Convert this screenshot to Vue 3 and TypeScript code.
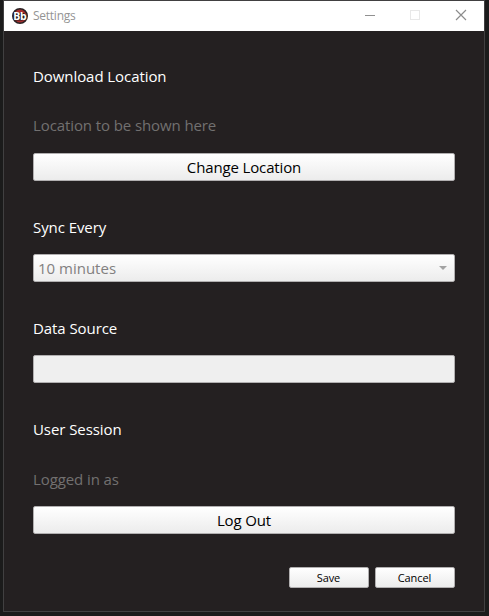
<script setup lang="ts">
import { ref } from 'vue'

const title = 'Settings'
const interval = ref('10 minutes')
const source = ref('')
</script>

<template>
  <div class="desktop">
    <main class="window">
      <header class="titlebar">
        <svg class="logo" width="16" height="16" viewBox="0 0 16 16">
          <circle cx="8" cy="8" r="7.2" fill="#a62d2d" stroke="#2b2224" stroke-width="1.6" />
          <path d="M1 5.2l3-1.5 3 1 5 .3 2.6 3-1.4 3.4-3.2 1.2H4L1 10z" fill="#251d20" />
          <text x="7.7" y="11.6" class="logo-text">Bb</text>
        </svg>
        <span class="title">{{ title }}</span>
        <nav class="controls">
          <svg width="46" height="30" viewBox="0 0 46 30"><path d="M19 14.5h10" stroke="#909090" /></svg>
          <svg width="46" height="30" viewBox="0 0 46 30"><rect x="18.5" y="9.5" width="9" height="9" fill="none" stroke="#e8e8e8" /></svg>
          <svg width="46" height="30" viewBox="0 0 46 30"><path d="M18 9l10 10M28 9L18 19" stroke="#8c8c8c" stroke-width="1.15" /></svg>
        </nav>
      </header>

      <section class="body">
        <div class="group">
          <h2>Download Location</h2>
          <p>Location to be shown here</p>
          <button class="control">Change Location</button>
        </div>
        <div class="group">
          <h2>Sync Every</h2>
          <div class="control select">
            <span>{{ interval }}</span>
            <svg width="8" height="4" viewBox="0 0 8 4"><path d="M0 0h8L4 4z" fill="#a3a3a3" /></svg>
          </div>
        </div>
        <div class="group">
          <h2>Data Source</h2>
          <input v-model="source" class="control input" type="text" />
        </div>
        <div class="group">
          <h2>User Session</h2>
          <p class="user">Logged in as</p>
          <button class="control">Log Out</button>
        </div>
        <footer>
          <button class="small">Save</button>
          <button class="small">Cancel</button>
        </footer>
      </section>
    </main>
  </div>
</template>

<style>
body {
  background: #1b1b1b;
}
</style>

<style scoped>
.desktop {
  box-sizing: border-box;
  width: 489px;
  height: 616px;
  padding: 0 4px 4px 3px;
  background: #1b1b1b;
  font-family: "Open Sans", "Noto Sans", sans-serif;
}
.window {
  box-sizing: border-box;
  width: 482px;
  height: 612px;
  border: 1px solid #414041;
  background: #242021;
}
.titlebar {
  display: flex;
  align-items: center;
  box-sizing: border-box;
  height: 30px;
  padding-left: 8px;
  background: #fff;
}
.logo {
  display: block;
  margin-top: -1px;
}
.logo-text {
  font: 700 10.5px "Open Sans", sans-serif;
  letter-spacing: -0.4px;
  fill: #fff;
  text-anchor: middle;
}
.title {
  margin-left: 5px;
  font-size: 12px;
  line-height: 16px;
  letter-spacing: -0.25px;
  color: #949494;
}
.controls {
  display: flex;
  margin-left: auto;
}
.controls svg {
  display: block;
}
.body {
  padding: 35px 29px 0;
}
.group {
  display: flex;
  flex-direction: column;
  margin-bottom: 36px;
}
h2,
p {
  margin: 0;
  font-size: 15px;
  font-weight: 400;
  line-height: 20px;
}
h2 {
  margin-bottom: 17px;
  letter-spacing: -0.07px;
  color: #fff;
}
p {
  margin: 12px 0 18px;
  letter-spacing: -0.1px;
  color: #727070;
}
.user {
  margin: 13px 0 17px;
}
.control {
  box-sizing: border-box;
  width: 422px;
  height: 28px;
  margin: 0;
  padding: 0 5px;
  border: 1px solid #b1afb0;
  border-radius: 2px;
  background: linear-gradient(#fff, #ececec);
  font: 15px/26px "Open Sans", "Noto Sans", sans-serif;
  letter-spacing: -0.14px;
  color: #000;
}
.select {
  display: flex;
  align-items: center;
  justify-content: space-between;
  padding: 0 7px 0 4px;
  letter-spacing: 0;
  color: #828080;
}
.input {
  background: #efefef;
  outline: none;
}
footer {
  display: flex;
  justify-content: flex-end;
  gap: 6px;
  margin-top: -3px;
}
.small {
  box-sizing: border-box;
  width: 80px;
  height: 21px;
  padding: 0 1px 0 0;
  border: 1px solid #b1afb0;
  border-radius: 2px;
  background: linear-gradient(#fff, #ececec);
  font: 11px/19px "Open Sans", "Noto Sans", sans-serif;
  letter-spacing: -0.1px;
  color: #000;
}
</style>
